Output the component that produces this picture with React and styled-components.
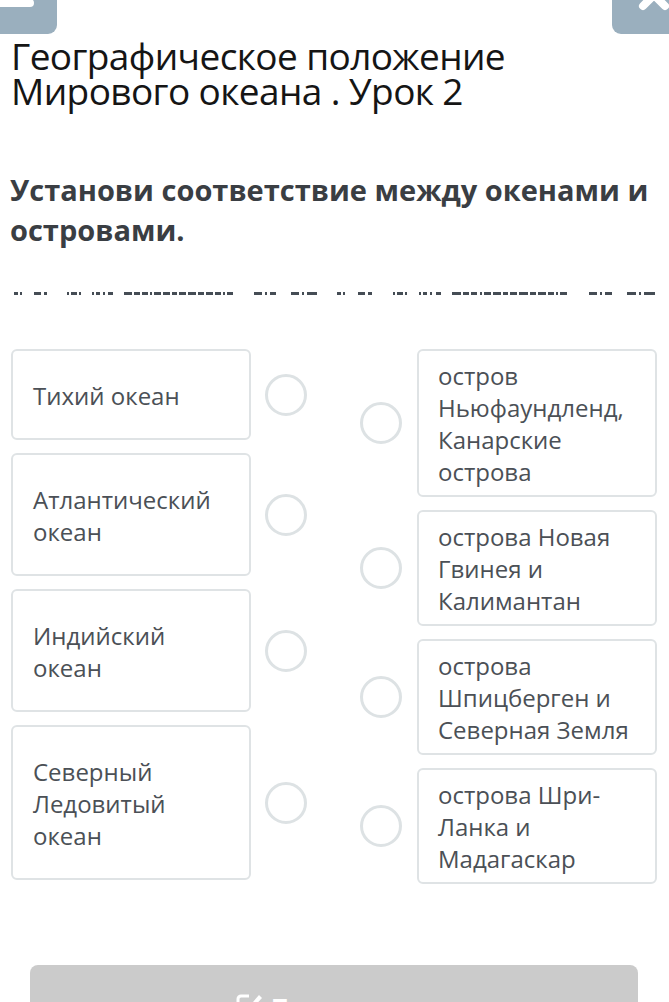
import React from 'react'
import styled, { createGlobalStyle } from 'styled-components'

const GlobalStyle = createGlobalStyle`
  html, body {
    margin: 0;
    padding: 0;
    background: #ffffff;
    overflow: hidden;
    font-family: 'Open Sans', 'Noto Sans', sans-serif;
  }
`

const Page = styled.div`
  width: 669px;
  height: 1002px;
  display: flex;
  flex-direction: column;
  overflow: hidden;
`

const TopBar = styled.div`
  display: flex;
  justify-content: space-between;
  height: 34px;
`

const CornerButton = styled.div`
  position: relative;
  width: 57px;
  height: 34px;
  background: #9aafbe;
  overflow: hidden;
  border-radius: ${(p) => (p.$side === 'left' ? '0 0 9px 0' : '0 0 0 9px')};
`

const MenuBar = styled.div`
  position: absolute;
  left: -4px;
  top: -1px;
  width: 38px;
  height: 8px;
  border-radius: 4px;
  background: #ffffff;
`

const CloseIcon = styled.svg`
  position: absolute;
  left: 26px;
  top: -21px;
`

const Title = styled.h1`
  margin: 4px 0 0 11px;
  font-weight: 400;
  font-size: 37px;
  letter-spacing: -0.6px;
  line-height: 35px;
  color: #151515;
`

const Question = styled.h2`
  margin: 62px 0 0 10px;
  font-weight: 700;
  font-size: 29px;
  line-height: 40px;
  color: #3a3e43;
`

const DashRow = styled.div`
  display: flex;
  align-items: center;
  height: 3px;
  margin: 42px 0 0 14px;
  gap: 20px;
`

const Strip = styled.div`
  display: flex;
  width: ${(p) => p.$w}px;
  height: 3px;
`

const Dash = styled.span`
  display: block;
  height: 3px;
  background: #454d55;
  flex: none;
`

const Board = styled.div`
  display: flex;
  justify-content: space-between;
  padding: 0 12px 0 11px;
  margin-top: 54px;
`

const Column = styled.div`
  display: flex;
  flex-direction: column;
  gap: 13px;
`

const Row = styled.div`
  display: flex;
  align-items: center;
  gap: ${(p) => (p.$right ? '15px' : '14px')};
`

const Card = styled.div`
  box-sizing: border-box;
  width: 240px;
  border: 2px solid #dfe3e5;
  border-radius: 6px;
  background: #ffffff;
  padding: ${(p) => (p.$right ? '9px 14px 7px 19px' : '29px 14px 26px 20px')};
  font-size: 24px;
  line-height: 32px;
  color: #4b5056;
`

const Dot = styled.span`
  box-sizing: border-box;
  flex: none;
  width: 42px;
  height: 42px;
  border-radius: 50%;
  border: 3px solid #dde2e4;
  background: #ffffff;
`

const Footer = styled.div`
  margin-top: auto;
  padding: 0 31px 0 30px;
`

const SubmitButton = styled.div`
  height: 75px;
  margin-bottom: -38px;
  background: #cbcbcb;
  border-radius: 8px;
  display: flex;
  align-items: flex-start;
  gap: 8px;
  padding: 27px 0 0 205px;
  box-sizing: border-box;
  color: #ffffff;
  font-weight: 700;
  font-size: 24px;
  line-height: 30px;
`

const oceans = [
  'Тихий океан',
  'Атлантический океан',
  'Индийский океан',
  'Северный Ледовитый океан',
]

const islands = [
  'остров Ньюфаундленд, Канарские острова',
  'острова Новая Гвинея и Калимантан',
  'острова Шпицберген и Северная Земля',
  'острова Шри-Ланка и Мадагаскар',
]

// blurred answer strip, segments as [start, end] on a 303px span
const segments = [
  [0, 4], [6, 8], [20, 27], [30, 33], [53, 55], [57, 63], [65, 67], [78, 80],
  [82, 86], [89, 91], [94, 99], [110, 118], [120, 126], [128, 134], [136, 138],
  [140, 147], [149, 156], [158, 163], [165, 172], [174, 182], [184, 190],
  [192, 199], [201, 207], [209, 211], [213, 219], [240, 248], [251, 253],
  [256, 262], [277, 285], [288, 290], [293, 303],
]

const SPAN = 303

const AnswerStrip = ({ width }) => (
  <Strip $w={width}>
    {segments.map(([a, b], i) => {
      const next = segments[i + 1] ? segments[i + 1][0] : SPAN
      return (
        <Dash
          key={i}
          style={{ width: `${((b - a) / SPAN) * 100}%`, marginRight: `${((next - b) / SPAN) * 100}%` }}
        />
      )
    })}
  </Strip>
)

export default function App() {
  return (
    <Page>
      <GlobalStyle />
      <TopBar>
        <CornerButton $side="left">
          <MenuBar />
        </CornerButton>
        <CornerButton $side="right">
          <CloseIcon width="32" height="32" viewBox="0 0 32 32">
            <path d="M5 5 L27 27 M27 5 L5 27" stroke="#ffffff" strokeWidth="8" strokeLinecap="round" />
          </CloseIcon>
        </CornerButton>
      </TopBar>

      <Title>
        Географическое положение
        <br />
        Мирового океана . Урок 2
      </Title>

      <Question>Установи соответствие между окенами и островами.</Question>

      <DashRow>
        <AnswerStrip width={303} />
        <AnswerStrip width={318} />
      </DashRow>

      <Board>
        <Column>
          {oceans.map((t) => (
            <Row key={t}>
              <Card>{t}</Card>
              <Dot />
            </Row>
          ))}
        </Column>
        <Column>
          {islands.map((t) => (
            <Row key={t} $right>
              <Dot />
              <Card $right>{t}</Card>
            </Row>
          ))}
        </Column>
      </Board>

      <Footer>
        <SubmitButton>
          <svg width="28" height="28" viewBox="0 0 28 28">
            <path d="M14 4 H6 a3 3 0 0 0 -3 3 V22 a3 3 0 0 0 3 3 H21 a3 3 0 0 0 3 -3 V15" fill="none" stroke="#ffffff" strokeWidth="3" />
            <path d="M12 17 L24 3 L27 6 L15 19 L11 20 Z" fill="#ffffff" />
          </svg>
          <span>Проверить</span>
        </SubmitButton>
      </Footer>
    </Page>
  )
}
